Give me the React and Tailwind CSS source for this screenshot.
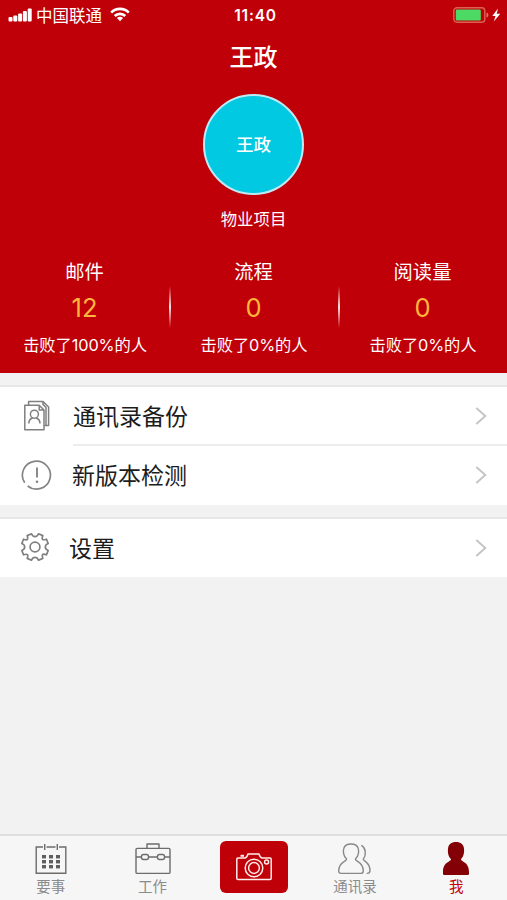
import React from 'react';

const stats = [
  { label: '邮件', value: '12', note: '击败了100%的人' },
  { label: '流程', value: '0', note: '击败了0%的人' },
  { label: '阅读量', value: '0', note: '击败了0%的人' },
];

function StatusBar() {
  return (
    <div className="grid h-[30px] grid-cols-3 items-center text-white">
      <div className="flex items-center pl-[8px]">
        <svg className="-mt-[1px]" width="24" height="14" viewBox="0 0 24 14" fill="currentColor">
          <rect x="0.5" y="9" width="4" height="4.5" rx="1" />
          <rect x="5.3" y="7.5" width="4" height="6" rx="1" />
          <rect x="10.1" y="5.5" width="4" height="8" rx="1" />
          <rect x="14.9" y="3" width="4" height="10.5" rx="1" />
          <rect x="19.7" y="0.5" width="4" height="13" rx="1" />
        </svg>
        <span className="ml-[4px] pt-[1px] text-[16.5px] leading-[30px] whitespace-nowrap">中国联通</span>
        <svg className="-mt-[2px] ml-[8px]" width="20" height="15" viewBox="0 0 20 15" fill="none" stroke="currentColor" strokeWidth="2.7">
          <path d="M1.2 5.6a12.4 12.4 0 0 1 17.6 0" />
          <path d="M4.7 9a7.5 7.5 0 0 1 10.6 0" />
          <path d="M10 14.2 6.9 11a4.4 4.4 0 0 1 6.2 0Z" fill="currentColor" stroke="none" />
        </svg>
      </div>
      <div className="pt-[1px] pl-[4px] text-center text-[15.5px] leading-[30px] font-semibold tracking-[0.8px]">11:40</div>
      <div className="-mt-[2px] flex items-center justify-end pr-[6px]">
        <svg width="48" height="16" viewBox="0 0 48 16">
          <rect x="0.8" y="0.8" width="31" height="14.4" rx="3.2" fill="none" stroke="#dc6254" strokeWidth="1.4" />
          <rect x="2.8" y="2.6" width="25" height="10.8" rx="1.2" fill="#4cd964" />
          <path d="M33.5 5.5c2.5.4 2.5 4.6 0 5Z" fill="#dc7770" />
          <path d="M45 1.5 39.3 9h3.2L40.8 14.6 47.3 6.8h-3.6Z" fill="#fff" />
        </svg>
      </div>
    </div>
  );
}

function BackupIcon() {
  return (
    <svg width="28" height="32" viewBox="0 0 28 32" fill="none" stroke="#808080" strokeWidth="1.5" strokeLinejoin="round">
      <path d="M1.8 5.2H16.2L21 10V29.8H1.8Z" />
      <path d="M16.2 5.2V10H21" />
      <path d="M5.6 5V1.6H20L25.6 7V25.6H21.2" />
      <path d="M20 1.6V4.4L23 7.6V25.4" />
      <circle cx="11.4" cy="14.2" r="4" />
      <path d="M5.8 23.6C5.8 20.4 7.4 18.8 9.7 17.8M13.1 17.8C15.4 18.8 17 20.4 17 23.6" />
    </svg>
  );
}

function VersionIcon() {
  return (
    <svg width="32" height="32" viewBox="0 0 32 32" fill="none" stroke="#858585" strokeWidth="1.7">
      <path d="M3.7 23.8A14 14 0 1 1 6.6 27" />
      <path d="M16 8.5V18.5" strokeWidth="1.9" />
      <circle cx="16" cy="22.7" r="1.3" fill="#858585" stroke="none" />
    </svg>
  );
}

function GearIcon() {
  return (
    <svg className="-mt-[2px]" width="30" height="30" viewBox="0 0 30 30" fill="none" stroke="#808080" strokeWidth="1.7" strokeLinejoin="round">
      <path d="M11.5 1.8Q12.6 4.7 15 4.7T18.5 1.8L22.8 3.6Q21.6 6.6 22.6 7.4T26.4 7.2L28.2 11.5Q25.3 12.6 25.3 15T28.2 18.5L26.4 22.8Q23.4 21.6 22.6 22.6T22.8 26.4L18.5 28.2Q17.4 25.3 15 25.3T11.5 28.2L7.2 26.4Q8.4 23.4 7.4 22.6T3.6 22.8L1.8 18.5Q4.7 17.4 4.7 15T1.8 11.5L3.6 7.2Q6.6 8.4 7.4 7.4T7.2 3.6Z" />
      <circle cx="15" cy="15" r="4.9" />
    </svg>
  );
}

function Chevron() {
  return (
    <svg className="mr-[20px] ml-auto" width="12" height="18" viewBox="0 0 12 18" fill="none" stroke="#c4c4c6" strokeWidth="1.9">
      <path d="M1.3 1 10.3 9 1.3 17" />
    </svg>
  );
}

function TabLabel({ children, active }) {
  return (
    <span className={`mt-[1px] h-[18px] text-[14.5px] leading-[18px] ${active ? 'text-[#c20008]' : 'text-[#8b8b8b]'}`}>
      {children}
    </span>
  );
}

export default function App() {
  return (
    <div className="flex h-[900px] w-[507px] flex-col overflow-hidden bg-[#f2f2f2] font-[Inter,'Noto_Sans_CJK_SC',sans-serif]">
      <header className="h-[373px] shrink-0 bg-[#c00008] text-white">
        <StatusBar />
        <h1 className="h-[54px] pt-[1px] text-center text-[24px] leading-[54px] font-medium">王政</h1>
        <div className="mx-auto mt-[10px] flex size-[101px] items-center justify-center rounded-full border-[2px] border-[#bdeaf5] bg-[#00c9e1] pt-[2px] text-[17.5px] font-medium">
          王政
        </div>
        <p className="mt-[12px] h-[24px] text-center text-[16.4px] leading-[24px]">物业项目</p>
        <div className="mt-[28px] grid grid-cols-3">
          {stats.map((s, i) => (
            <div key={s.label} className="flex">
              <div className="flex grow flex-col items-center">
                <span className="h-[26px] text-[19.3px] leading-[26px]">{s.label}</span>
                <span className="mt-[7px] h-[32px] text-[25.5px] leading-[32px] text-[#fdb63c]">{s.value}</span>
                <span className="mt-[9px] h-[24px] pl-[1px] text-[16.3px] leading-[24px] tracking-[-0.1px] whitespace-nowrap">{s.note}</span>
              </div>
              {i < 2 && <div className="mt-[27px] -mr-[2px] h-[42px] w-[2px] bg-linear-to-b from-white/0 via-white/90 to-white/0" />}
            </div>
          ))}
        </div>
      </header>

      <main className="grow pt-[12px] text-[23px] text-[#1c1c1c]">
        <section className="border-t-2 border-[#e7e7e8] bg-white">
          <div className="flex h-[57px] items-center pl-[23px]">
            <BackupIcon />
            <span className="ml-[22px] pt-[3px]">通讯录备份</span>
            <Chevron />
          </div>
          <div className="ml-[73px] h-[2px] bg-[#ececec]" />
          <div className="flex h-[59px] items-center pb-[1px] pl-[21px]">
            <VersionIcon />
            <span className="ml-[19px] pt-[3px]">新版本检测</span>
            <Chevron />
          </div>
        </section>
        <section className="mt-[12px] border-t-2 border-[#e7e7e8] bg-white">
          <div className="flex h-[58px] items-center pl-[20px]">
            <GearIcon />
            <span className="ml-[19px] pt-[2px]">设置</span>
            <Chevron />
          </div>
        </section>
      </main>

      <nav className="grid h-[66px] shrink-0 grid-cols-5 border-t-2 border-[#dedede] bg-[#f6f6f6]">
        <div className="flex flex-col items-center pt-[7px]">
          <svg width="32" height="34" viewBox="0 0 32 34" fill="none" stroke="#6c6c6c" strokeWidth="1.4">
            <path d="M8 4H1.2V30.3H30.8V4H24M11.5 4H20.5M9.7 1V7M22.3 1V7" />
            <g fill="#5e5e5e" stroke="none">
              <rect x="7" y="12" width="4" height="3.4" /><rect x="14" y="12" width="4" height="3.4" /><rect x="21" y="12" width="4" height="3.4" />
              <rect x="7" y="17" width="4" height="3.4" /><rect x="14" y="17" width="4" height="3.4" /><rect x="21" y="17" width="4" height="3.4" />
              <rect x="7" y="22" width="4" height="3.4" /><rect x="14" y="22" width="4" height="3.4" /><rect x="21" y="22" width="4" height="3.4" />
            </g>
          </svg>
          <TabLabel>要事</TabLabel>
        </div>
        <div className="flex flex-col items-center pt-[7px] pl-[1px]">
          <svg width="36" height="34" viewBox="0 0 36 34" fill="none" stroke="#6c6c6c" strokeWidth="1.4" strokeLinejoin="round">
            <rect x="1" y="5.4" width="34" height="25" rx="1.2" />
            <path d="M12 5.4V1H24V5.4M1 14H6.5M13.5 14H22.5M29.5 14H35" />
            <rect x="6.5" y="11.5" width="7" height="5" rx="2" />
            <rect x="22.5" y="11.5" width="7" height="5" rx="2" />
          </svg>
          <TabLabel>工作</TabLabel>
        </div>
        <div className="flex justify-center pt-[5px] pl-[1px]">
          <div className="flex h-[52px] w-[68px] shrink-0 items-center justify-center rounded-[6px] bg-[#c00008]">
            <svg width="38" height="30" viewBox="0 0 38 30" fill="none" stroke="#ffeceb" strokeWidth="1.5" strokeLinejoin="round">
              <path d="M3 6H10Q12 5.5 13 2H24Q25 5.5 27 6H35Q36.2 6 36.2 7.2V26.3Q36.2 27.5 35 27.5H3Q1.8 27.5 1.8 26.3V7.2Q1.8 6 3 6Z" />
              <circle cx="19" cy="16" r="8.8" />
              <circle cx="19" cy="16" r="5.4" />
              <circle cx="31.6" cy="10" r="2" />
              <path d="M5.5 3.8H9" strokeWidth="2" />
            </svg>
          </div>
        </div>
        <div className="flex flex-col items-center pt-[7px]">
          <svg width="34" height="34" viewBox="0 0 34 34" fill="none" stroke="#888888" strokeWidth="1.4" strokeLinejoin="round" strokeLinecap="round">
            <path d="M8.6 16C5.2 13.4 5 8 5.8 5.4C6.6 2.4 9.6 1 13 1S19.4 2.4 20.2 5.4C21 8 20.8 13.4 17.4 16C17.2 18.8 25.3 18.5 25.3 28Q25.3 30.4 22.8 30.4H3.2Q.7 30.4 .7 28C.7 18.5 8.8 18.8 8.6 16Z" />
            <path d="M23.8 2.6C28 5 28.4 12 25.2 16.3C26.3 18.8 32 19.5 32 27.5Q32 30.4 29.2 30.4" />
          </svg>
          <TabLabel>通讯录</TabLabel>
        </div>
        <div className="flex flex-col items-center pt-[5px]">
          <svg width="28" height="36" viewBox="0 0 28 36" fill="#820006">
            <path d="M9 18C6 15.4 5.4 10 6.2 6.4C7 2.6 10.4 1 14 1S21 2.6 21.8 6.4C22.6 10 22 15.4 19 18C18.8 21 27 20.5 27 31V32.8Q27 34 25.7 34H2.3Q1 34 1 32.8V31C1 20.5 9.2 21 9 18Z" />
          </svg>
          <TabLabel active>我</TabLabel>
        </div>
      </nav>
    </div>
  );
}
